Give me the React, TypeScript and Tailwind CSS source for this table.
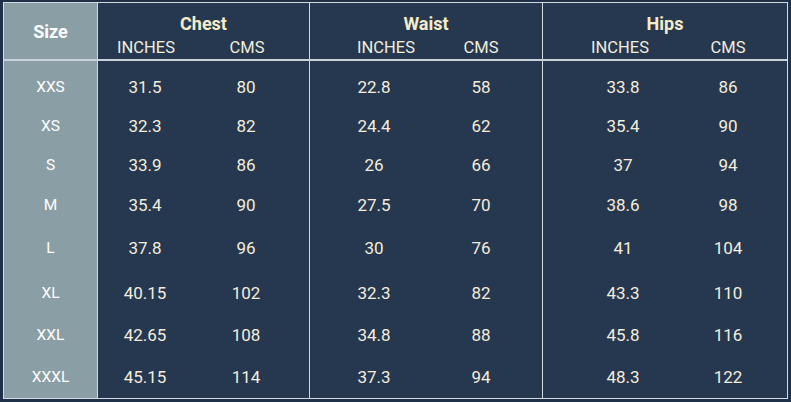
const groups = [
  { name: 'Chest', width: 'w-[212px]', head: ['w-[96px]', 'w-[106px]'], cell: ['w-[94px]', 'w-[108px]'] },
  { name: 'Waist', width: 'w-[233px]', head: ['w-[152px]', 'w-[38px]'], cell: ['w-[128px]', 'w-[86px]'] },
  { name: 'Hips', width: 'flex-1', head: ['w-[154px]', 'w-[62px]'], cell: ['w-[160px]', 'w-[50px]'] },
];

const rows = [
  { size: 'XXS', h: 'h-[39px]', vals: ['31.5', '80', '22.8', '58', '33.8', '86'] },
  { size: 'XS', h: 'h-[39px]', vals: ['32.3', '82', '24.4', '62', '35.4', '90'] },
  { size: 'S', h: 'h-[39px]', vals: ['33.9', '86', '26', '66', '37', '94'] },
  { size: 'M', h: 'h-[41px]', vals: ['35.4', '90', '27.5', '70', '38.6', '98'] },
  { size: 'L', h: 'h-[46px]', vals: ['37.8', '96', '30', '76', '41', '104'] },
  { size: 'XL', h: 'h-[43px]', vals: ['40.15', '102', '32.3', '82', '43.3', '110'] },
  { size: 'XXL', h: 'h-[42px]', vals: ['42.65', '108', '34.8', '88', '45.8', '116'] },
  { size: 'XXXL', h: 'h-[42px]', vals: ['45.15', '114', '37.3', '94', '48.3', '122'] },
];

export default function App() {
  return (
    <div
      className="w-[791px] h-[402px] bg-[#1f3049] pt-[2px] pl-[3px] pr-[3px] pb-[3px]"
      style={{ fontFamily: 'Roboto, "Liberation Sans", Arial, sans-serif' }}
    >
      <div className="h-full border border-[#d3dbe2] bg-[#26384f] flex flex-col">
        {/* header */}
        <div className="flex h-[58px] border-b-2 border-[#c9d2da]">
          <div className="w-[94px] bg-[#8a9ea6] border-r border-[#d3dbe2] flex items-center justify-center">
            <span className="text-[18px] font-bold text-white">Size</span>
          </div>
          {groups.map((g, gi) => (
            <div
              key={g.name}
              className={`${g.width} ${gi < 2 ? 'border-r border-[#d3dbe2]' : ''} flex flex-col pt-[9px]`}
            >
              <div className="text-center text-[18px] leading-[24px] font-bold text-[#f4ecc9]">{g.name}</div>
              <div className="flex text-[16.5px] leading-[20px] text-[#f1ecdd] mt-[2px]">
                <div className={`${g.head[0]} shrink-0 text-center`}>INCHES</div>
                <div className={`${g.head[1]} shrink-0 text-center`}>CMS</div>
              </div>
            </div>
          ))}
        </div>

        {/* body */}
        <div className="flex-1 flex flex-col">
          <div className="flex h-[7px]">
            <div className="w-[94px] bg-[#8a9ea6] border-r border-[#d3dbe2]" />
            <div className="w-[212px] border-r border-[#d3dbe2]" />
            <div className="w-[233px] border-r border-[#d3dbe2]" />
            <div className="flex-1" />
          </div>
          {rows.map((r, ri) => (
            <div key={r.size} className={`flex ${ri === rows.length - 1 ? 'flex-1' : r.h}`}>
              <div className="w-[94px] bg-[#8a9ea6] border-r border-[#d3dbe2] flex items-center justify-center text-[15.5px] text-white">
                {r.size}
              </div>
              {groups.map((g, gi) => (
                <div
                  key={g.name}
                  className={`${g.width} ${gi < 2 ? 'border-r border-[#d3dbe2]' : ''} flex items-center text-[17px] text-[#f3eddc]`}
                >
                  <div className={`${g.cell[0]} shrink-0 text-center`}>{r.vals[gi * 2]}</div>
                  <div className={`${g.cell[1]} shrink-0 text-center`}>{r.vals[gi * 2 + 1]}</div>
                </div>
              ))}
            </div>
          ))}
        </div>
      </div>
    </div>
  );
}
